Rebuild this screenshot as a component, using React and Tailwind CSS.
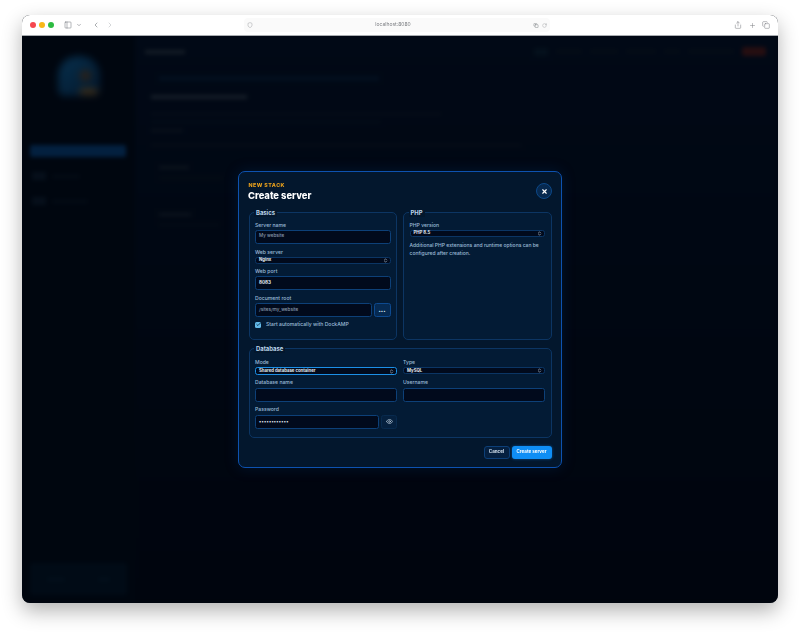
import React from "react";
import { Eye, X, Check, ChevronLeft, ChevronRight, ChevronDown, Plus, RotateCw, Share, Copy, PanelLeft, Shield, ChevronsUpDown } from "lucide-react";

const font = "font-['Inter','Liberation_Sans',sans-serif]";

function Label({ children, className = "" }) {
  return <div className={`text-[5.1px] leading-[7px] font-medium text-[#9dbcd8] ${className}`}>{children}</div>;
}

function TextInput({ value, dim, bold, className = "" }) {
  return (
    <div className={`h-[14px] rounded-[2.5px] border border-[#0d4078] bg-[#010a1c] px-[3px] flex items-center text-[4.6px] ${dim ? "text-[#8a9bae] font-medium" : "text-[#e2eaf2]"} ${bold ? "font-bold" : ""} ${className}`}>
      {value}
    </div>
  );
}

function Select({ value, focus, className = "" }) {
  return (
    <div className={`rounded-[2.5px] bg-[#010a1c] pl-[3px] pr-[2px] pt-[0.5px] flex items-center justify-between text-[4.3px] font-bold text-[#e6edf4] ${focus ? "border border-[#1c8fe6] h-[8px]" : "border border-[#0b3564] h-[7.5px]"} ${className}`}>
      <span>{value}</span>
      <ChevronsUpDown className="w-[5px] h-[5px] text-[#c5d2de]" strokeWidth={3} />
    </div>
  );
}

function Field({ legend, children, className = "" }) {
  return (
    <div className={`relative rounded-[5px] border border-[#0c3563] bg-[#031b35] px-[5.5px] ${className}`}>
      <div className="absolute left-[4.5px] top-[-4px] bg-[#03172d] px-[2px] text-[5.9px] leading-[8px] font-bold text-[#bcd5ea]">{legend}</div>
      {children}
    </div>
  );
}

function BgBars() {
  return (
    <div className="absolute inset-0 flex blur-[2px]">
      <aside className="w-[113px] shrink-0 bg-[#00060f] px-[8px] flex flex-col">
        <div className="mt-[20px] mx-auto relative w-[42px] h-[40px] rounded-t-[20px] rounded-b-[6px] bg-gradient-to-br from-[#07304e] to-[#03172b] blur-[3px]">
          <div className="absolute right-[9px] top-[14px] w-[11px] h-[11px] rounded-full bg-[#2c2016]" />
          <div className="absolute right-[3px] bottom-[2px] w-[17px] h-[5px] bg-[#4a3110]" />
        </div>
        <div className="mt-[49px] h-[12px] w-[96px] rounded-[2px] bg-[#03203f]" />
        <div className="mt-[15px] flex gap-[6px] items-center px-[2px]">
          <div className="w-[14px] h-[8px] bg-[#060f1b] rounded-[1px]" />
          <div className="w-[28px] h-[3px] bg-[#040c16]" />
        </div>
        <div className="mt-[17px] flex gap-[6px] items-center px-[2px]">
          <div className="w-[14px] h-[8px] bg-[#060f1b] rounded-[1px]" />
          <div className="w-[36px] h-[3px] bg-[#040c16]" />
        </div>
        <div className="mt-auto mb-[8px] h-[32px] rounded-[3px] bg-[#010b16] flex items-center justify-around">
          <div className="w-[18px] h-[3px] bg-[#03101c]" />
          <div className="w-[12px] h-[3px] bg-[#03101c]" />
        </div>
      </aside>
      <main className="flex-1 bg-gradient-to-b from-[#010916] to-[#00050e] pl-[10px] pr-[12px] pt-[11px]">
        <div className="flex items-center justify-between">
          <div className="h-[4px] w-[40px] bg-[#141c26]" />
          <div className="flex items-center gap-[8px]">
            <div className="w-[14px] h-[8px] bg-[#04101c]" />
            <div className="w-[26px] h-[3px] bg-[#060e17]" />
            <div className="w-[28px] h-[3px] bg-[#060e17]" />
            <div className="w-[30px] h-[3px] bg-[#060e17]" />
            <div className="w-[16px] h-[3px] bg-[#060e17]" />
            <div className="w-[46px] h-[3px] bg-[#060e17]" />
            <div className="w-[24px] h-[9px] rounded-[2px] bg-[#260e11]" />
          </div>
        </div>
        <div className="mt-[20px] ml-[14px] h-[5px] w-[220px] bg-[#020f1e]" />
        <div className="mt-[14px] ml-[6px] h-[4px] w-[96px] bg-[#151d27]" />
        <div className="mt-[14px] ml-[6px] h-[2px] w-[290px] bg-[#080f18]" />
        <div className="mt-[6px] ml-[6px] h-[2px] w-[230px] bg-[#050e18]" />
        <div className="mt-[6px] ml-[6px] h-[3px] w-[32px] bg-[#0a111a]" />
        <div className="mt-[12px] ml-[6px] h-[2px] w-[370px] bg-[#080f18]" />
        <div className="mt-[20px] ml-[14px] h-[3px] w-[30px] bg-[#0d141d]" />
        <div className="mt-[8px] ml-[14px] h-[2px] w-[64px] bg-[#060d15]" />
        <div className="mt-[34px] ml-[14px] h-[3px] w-[32px] bg-[#0d141d]" />
        <div className="mt-[8px] ml-[14px] h-[2px] w-[60px] bg-[#060d15]" />
      </main>
    </div>
  );
}

export default function App() {
  return (
    <div className={`w-[800px] h-[633px] bg-white pt-[15px] px-[22px] overflow-hidden ${font}`}>
      <div className="w-[756px] h-[588px] rounded-[8px] flex flex-col overflow-hidden bg-[#000711] shadow-[0_8px_20px_rgba(0,0,0,0.3)]">
        <header className="h-[21px] shrink-0 bg-white border-b border-[#a8acb0] flex items-center pl-[8px] pr-[8px] text-[#6b6f75]">
          <div className="flex gap-[3.5px]">
            <span className="w-[5.5px] h-[5.5px] rounded-full bg-[#f5474f]" />
            <span className="w-[5.5px] h-[5.5px] rounded-full bg-[#f8b718]" />
            <span className="w-[5.5px] h-[5.5px] rounded-full bg-[#2dbb41]" />
          </div>
          <PanelLeft className="ml-[10.5px] w-[8px] h-[8px]" strokeWidth={1.5} />
          <ChevronDown className="ml-[4px] w-[6px] h-[6px]" strokeWidth={2} />
          <ChevronLeft className="ml-[10px] w-[8px] h-[8px]" strokeWidth={1.7} />
          <ChevronRight className="ml-[6px] w-[8px] h-[8px] text-[#b5b8bc]" strokeWidth={1.7} />
          <div className="ml-[130px] w-[306px] h-[14px] rounded-[4px] bg-[#fafafa] flex items-center px-[3px]">
            <Shield className="w-[6px] h-[6px] text-[#8b8e92]" strokeWidth={1.6} />
            <span className="flex-1 text-center text-[5px] text-[#7a7d81] blur-[0.3px]">localhost:8080</span>
            <Copy className="w-[6px] h-[5px] text-[#7d8085] mr-[3px]" strokeWidth={2.4} />
            <RotateCw className="w-[5px] h-[5px] text-[#8b8e92]" strokeWidth={1.6} />
          </div>
          <div className="ml-auto flex items-center gap-[6.5px] text-[#74777c]">
            <Share className="w-[8px] h-[8px]" strokeWidth={1.5} />
            <Plus className="w-[7px] h-[7px]" strokeWidth={1.6} />
            <Copy className="w-[8px] h-[8px]" strokeWidth={1.5} />
          </div>
        </header>

        <div className="relative flex-1 flex items-center justify-center overflow-hidden">
          <BgBars />
          <div className="relative w-[324px] h-[297px] rounded-[7px] border border-[#0d52b0] bg-[#03172d] px-[9.5px] pt-[10px] shadow-[0_0_14px_rgba(5,60,130,0.25)] flex flex-col blur-[0.3px]">
            <div className="h-[20px] flex items-start justify-between">
              <div>
                <div className="text-[5.3px] leading-[7px] font-extrabold tracking-[0.45px] text-[#e8a01c]">NEW STACK</div>
                <div className="-ml-[0.5px] text-[9.4px] leading-[13px] font-extrabold text-white">Create server</div>
              </div>
              <button className="mt-[1px] mr-[-0.5px] w-[16px] h-[16px] rounded-full border border-[#0c4888] bg-[#07294f] flex items-center justify-center text-white">
                <X className="w-[7px] h-[7px]" strokeWidth={4} />
              </button>
            </div>

            <div className="mt-[9.5px] grid grid-cols-2 gap-[6px]">
              <Field legend="Basics" className="h-[128px] pt-[9px]">
                <Label>Server name</Label>
                <TextInput value="My website" dim className="mt-[1px]" />
                <Label className="mt-[5px]">Web server</Label>
                <Select value="Nginx" className="mt-[1px]" />
                <Label className="mt-[4px]">Web port</Label>
                <TextInput value="8083" bold className="mt-[1px]" />
                <Label className="mt-[5px]">Document root</Label>
                <div className="mt-[1px] flex gap-[2px]">
                  <TextInput value="/sites/my_website" dim className="flex-1" />
                  <button className="w-[17px] h-[14px] rounded-[2.5px] border border-[#0d4a90] bg-[#062a52] text-[7px] leading-[10px] font-bold text-[#dce6f0]">...</button>
                </div>
                <div className="mt-[4px] flex items-center gap-[5px]">
                  <span className="w-[6px] h-[6px] rounded-[1.5px] bg-[#63b9e8] flex items-center justify-center">
                    <Check className="w-[5px] h-[5px] text-[#04203c]" strokeWidth={4} />
                  </span>
                  <span className="text-[5.1px] leading-[7px] font-medium text-[#9dbcd8]">Start automatically with DockAMP</span>
                </div>
              </Field>
              <Field legend="PHP" className="h-[128px] pt-[9px]">
                <Label>PHP version</Label>
                <Select value="PHP 8.5" className="mt-[1px]" />
                <p className="mt-[5px] text-[5px] leading-[7.5px] font-medium text-[#9dbcd8]">Additional PHP extensions and runtime options can be configured after creation.</p>
              </Field>
            </div>

            <Field legend="Database" className="mt-[8.5px] h-[90px] pt-[9.8px]">
              <div className="grid grid-cols-2 gap-x-[6px]">
                <div>
                  <Label>Mode</Label>
                  <Select value="Shared database container" focus className="mt-[1px]" />
                </div>
                <div>
                  <Label>Type</Label>
                  <Select value="MySQL" className="mt-[1px]" />
                </div>
                <div className="mt-[4.4px]">
                  <Label>Database name</Label>
                  <TextInput value="" className="mt-[1.5px] h-[13px]" />
                </div>
                <div className="mt-[4.4px]">
                  <Label>Username</Label>
                  <TextInput value="" className="mt-[1.5px] h-[13px]" />
                </div>
                <div className="mt-[4.8px]">
                  <Label>Password</Label>
                  <div className="mt-[1.5px] flex gap-[2px]">
                    <TextInput value="••••••••••••" bold className="flex-1 tracking-[0.3px]" />
                    <button className="w-[16px] h-[14px] rounded-[2.5px] border border-[#082a4e] bg-[#05203e] flex items-center justify-center text-[#c5d6e5]">
                      <Eye className="w-[7px] h-[7px]" strokeWidth={2.2} />
                    </button>
                  </div>
                </div>
              </div>
            </Field>

            <div className="mt-[8px] flex justify-end gap-[2px]">
              <button className="w-[26px] h-[12.5px] pt-[1px] rounded-[3px] border border-[#0c3f78] bg-[#052040] text-[4.5px] font-bold text-[#d5e2ee]">Cancel</button>
              <button className="w-[40px] h-[12.5px] pt-[1px] rounded-[3px] bg-[#0f8ef5] text-[4.5px] font-bold text-white shadow-[0_0_3px_rgba(20,140,245,0.5)]">Create server</button>
            </div>
          </div>
        </div>
      </div>
    </div>
  );
}
